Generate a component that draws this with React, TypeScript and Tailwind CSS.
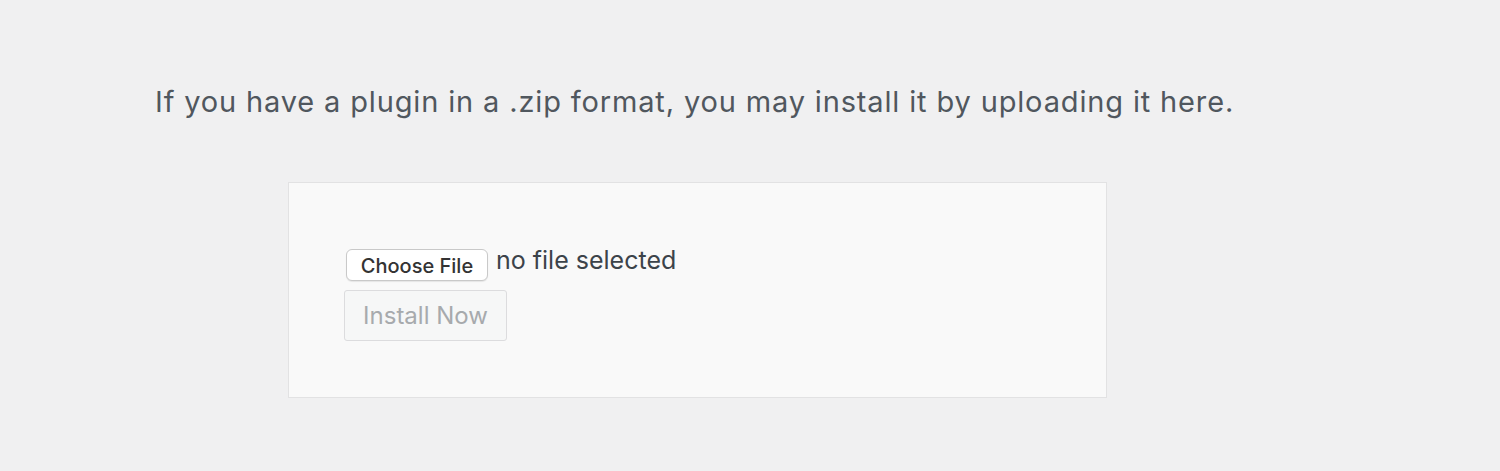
export default function App() {
  return (
    <div className="min-h-[471px] w-full bg-[#f0f0f1] pl-[155px] pt-[84px] font-['Inter','Liberation_Sans',Arial,sans-serif]">
      <p className="text-[29px] leading-[36px] tracking-[0.85px] text-[#50575e]">
        If you have a plugin in a .zip format, you may install it by uploading it here.
      </p>
      <div className="ml-[133px] mt-[62px] h-[216px] w-[819px] border border-[#e2e2e3] bg-[#f9f9f9] pl-[57px] pt-[66px]">
        <div className="flex items-center gap-2">
          <div className="flex h-[32px] w-[142px] items-center justify-center rounded-[6px] border border-[#c9c9c9] bg-white pt-[2px] text-[20px] font-medium text-[#333] shadow-[0_1px_1px_rgba(0,0,0,0.08)]">
            Choose File
          </div>
          <span className="-mt-[8px] text-[25px] text-[#3c434a]">no file selected</span>
        </div>
        <div className="-ml-[2px] mt-[9px] flex h-[51px] w-[163px] items-center justify-center rounded-[3px] border border-[#dcdcde] bg-[#f6f7f7] text-[24px] text-[#a7aaad]">
          Install Now
        </div>
      </div>
    </div>
  );
}
